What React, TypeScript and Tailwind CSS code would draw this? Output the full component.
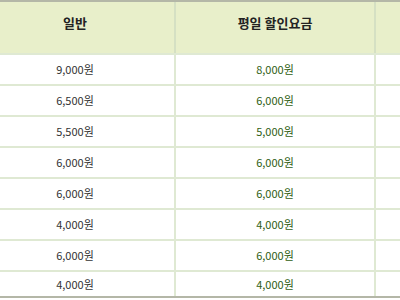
const rows = [
  ["9,000원", "8,000원"],
  ["6,500원", "6,000원"],
  ["5,500원", "5,000원"],
  ["6,000원", "6,000원"],
  ["6,000원", "6,000원"],
  ["4,000원", "4,000원"],
  ["6,000원", "6,000원"],
  ["4,000원", "4,000원"],
];

const font = { fontFamily: '"Noto Sans CJK KR", "Noto Sans", sans-serif' };

export default function App() {
  return (
    <div className="h-[300px] w-[400px] overflow-hidden bg-white" style={font}>
      <div className="-ml-[24px] w-[600px]">
        <div className="h-[2px] bg-[#b4b7a7]" />
        <div className="flex h-[51px] bg-[#e8efca] text-[13px] font-bold text-[#222]">
          <div className="flex w-[200px] items-center justify-center border-r-2 border-[#d5e0c3] pb-[10px]">일반</div>
          <div className="flex w-[200px] items-center justify-center border-r-2 border-[#d5e0c3] pb-[10px]">평일 할인요금</div>
          <div className="w-[200px]" />
        </div>
        {rows.map(([normal, sale], i) => (
          <div
            key={i}
            className={`flex border-t-2 border-[#dfe9d3] text-[11px] ${i === rows.length - 1 ? "h-[26px]" : "h-[31px]"}`}
          >
            <div className="flex w-[200px] items-center justify-center border-r-2 border-[#dfe9d3] text-[#333]">{normal}</div>
            <div className="flex w-[200px] items-center justify-center border-r-2 border-[#dfe9d3] text-[#2f5e12]">{sale}</div>
            <div className="w-[200px]" />
          </div>
        ))}
        <div className="h-[2px] bg-[#b4b7a7]" />
      </div>
    </div>
  );
}
